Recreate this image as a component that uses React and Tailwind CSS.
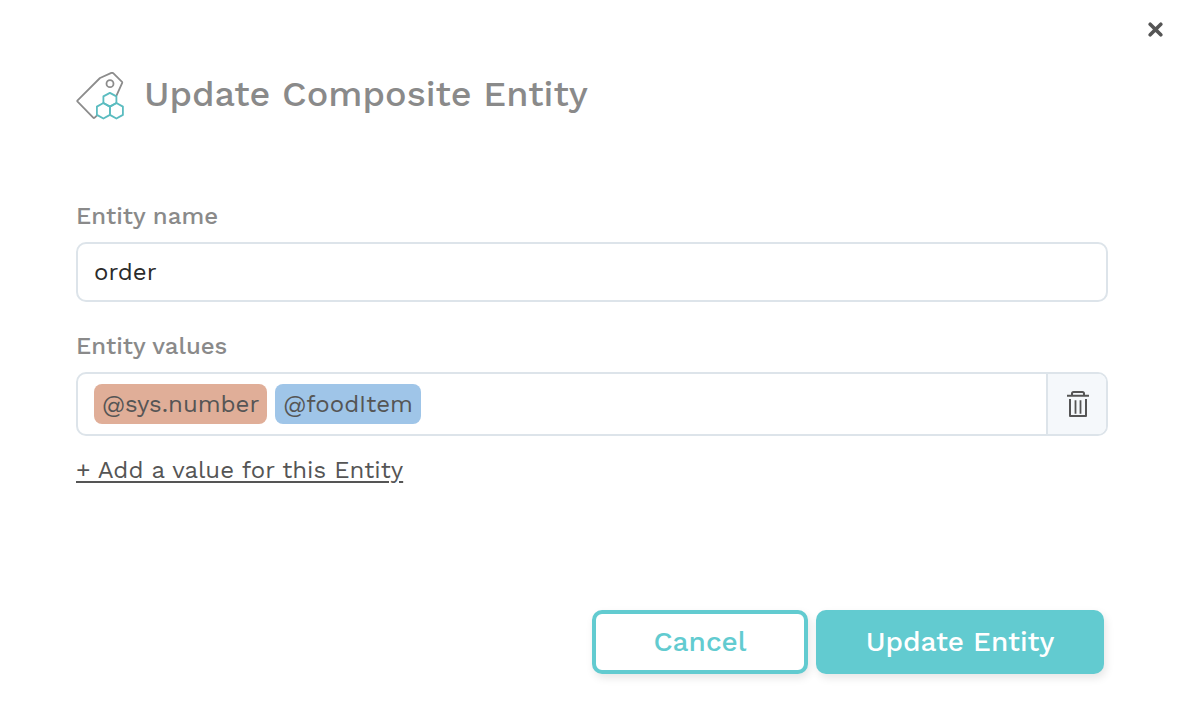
import { useState } from "react";

function TagIcon() {
  return (
    <svg viewBox="0 0 48 48" className="size-12 shrink-0" fill="none" strokeWidth="1.8" strokeLinejoin="round" strokeLinecap="round" aria-hidden="true">
      <path d="M40.6 23.4L46.2 10.9Q46.4 10.4 46 9.8L37.2 1.2Q36.4 .5 35.4 .9L24 6L1.6 28.4Q1 29 1.6 29.7L17.2 45.6Q17.9 46.3 18.7 45.6L20.8 43.6" stroke="#8c8c8c" />
      <circle cx="34" cy="11.7" r="3.5" stroke="#8c8c8c" />
      <g stroke="#5bbcc0">
        <path d="M33.9 20.9L40.4 24.4V31L33.9 34.6L27.4 31V24.4Z" />
        <path d="M27.4 31L33.9 34.6V42.9L27.4 46.5L20.9 42.9V34.6Z" />
        <path d="M40.4 31L46.9 34.6V42.9L40.4 46.5L33.9 42.9V34.6Z" />
      </g>
    </svg>
  );
}

function TrashIcon() {
  return (
    <svg viewBox="-2 0 24 28" className="h-7 w-6" fill="none" stroke="#555" aria-hidden="true">
      <path d="M0 5.7H22M5 5.7V3.6Q5 2 6.6 2H15.4Q17 2 17 3.6V5.7" strokeWidth="2" />
      <path d="M3 9V26H19V9" strokeWidth="2" strokeLinejoin="round" />
      <path d="M8.5 10.3V23.7M13.5 10.3V23.7" strokeWidth="1.8" />
    </svg>
  );
}

export default function App() {
  const [name, setName] = useState("order");
  return (
    <main className="min-h-screen bg-white font-['Work_Sans','Inter',sans-serif] text-[#555]">
      <header>
        <div className="flex justify-end px-4 pt-[18px]">
          <button type="button" aria-label="Close" className="flex size-6 items-center justify-center">
            <svg viewBox="0 0 16 16" className="size-4" stroke="#555" strokeWidth="3.6" strokeLinecap="round" aria-hidden="true">
              <path d="M2.2 2.2L12.8 12.8M12.8 2.2L2.2 12.8" />
            </svg>
          </button>
        </div>
        <div className="flex gap-5 px-[76px] pt-[30px]">
          <TagIcon />
          <h1 className="text-[36px] leading-[44px] font-medium text-[#8a8a8a]">Update Composite Entity</h1>
        </div>
      </header>
      <form className="px-[76px] pt-20" onSubmit={(e) => e.preventDefault()}>
        <label htmlFor="entity-name" className="block text-[24px] leading-8 font-medium text-[#8a8a8a]">Entity name</label>
        <input
          id="entity-name"
          type="text"
          value={name}
          onChange={(e) => setName(e.target.value)}
          className="mt-[10px] block h-[60px] w-full rounded-[10px] border-2 border-[#dde4ea] bg-white px-4 text-[24px] text-[#2b2b2b] outline-none"
        />
        <div role="group" aria-labelledby="values-label" className="pt-7">
          <div id="values-label" className="text-[24px] leading-8 font-medium text-[#8a8a8a]">Entity values</div>
          <div className="mt-[10px] flex h-16 overflow-hidden rounded-[10px] border-2 border-[#dde4ea]">
            <div className="flex flex-1 items-center gap-2 px-4 text-[24px]">
              <span className="flex h-10 items-center rounded-lg bg-[#e0ae98] px-2">@sys.number</span>
              <span className="flex h-10 items-center rounded-lg bg-[#9fc5e8] px-2">@foodItem</span>
            </div>
            <button type="button" aria-label="Delete value" className="flex w-[60px] items-center justify-center border-l-2 border-[#dde4ea] bg-[#f5f8fb]">
              <TrashIcon />
            </button>
          </div>
        </div>
        <button type="button" className="mt-[18px] block text-[24px] leading-8 underline decoration-2 underline-offset-3">
          + Add a value for this Entity
        </button>
        <div className="flex justify-end gap-2 pt-[124px] pr-1 pb-[38px] text-[28px] font-medium">
          <button type="button" className="h-16 w-[216px] rounded-[10px] border-4 border-[#62cbd0] bg-white text-[#62cbd0] shadow-[2px_4px_8px_rgba(0,0,0,0.1)]">Cancel</button>
          <button type="submit" className="h-16 w-72 rounded-[10px] bg-[#62cbd0] text-white shadow-[2px_4px_8px_rgba(0,0,0,0.1)]">Update Entity</button>
        </div>
      </form>
    </main>
  );
}
